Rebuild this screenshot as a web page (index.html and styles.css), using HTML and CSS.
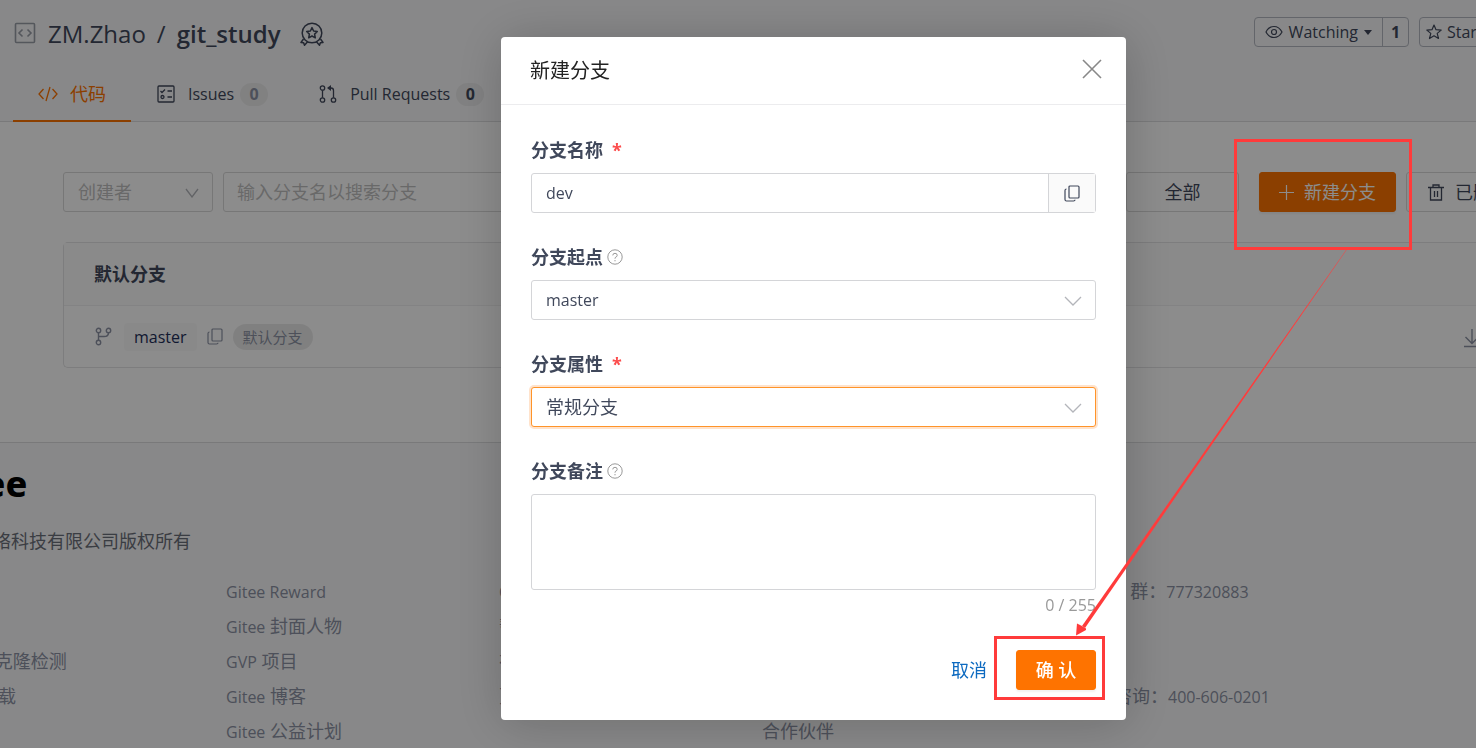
FILE: index.html
```html
<!DOCTYPE html>
<html lang="zh-CN">
<head>
<meta charset="utf-8">
<title>ZM.Zhao / git_study</title>
<link rel="stylesheet" href="styles.css">
</head>
<body>
<div class="page">
  <header class="repo-header">
    <div class="title-row">
      <svg class="repo-icon" width="22" height="22" viewBox="0 0 22 22" fill="none" stroke="currentColor" stroke-width="1.6"><rect x="1.5" y="1.5" width="19" height="19" rx="1"/><path d="M8.500 7.500L5 11l3.500 3.500M13.500 7.500L17 11l-3.500 3.500"/></svg>
      <h1 class="repo-title"><a href="#">ZM.Zhao</a><span class="slash">/</span><a href="#" class="repo-name">git_study</a></h1>
      <svg class="medal" width="24" height="24" viewBox="0 0 24 24" fill="none" stroke="currentColor" stroke-width="1.5" stroke-linejoin="round"><circle cx="12" cy="11" r="9.800"/><path d="M12 5.600l1.600 3.400 3.700.5-2.700 2.600.7 3.700L12 14l-3.300 1.800.7-3.700-2.700-2.600 3.700-.5zM3.500 17L1 20.500l2.600.2.900 2.600 3.300-3.800M20.500 17l2.500 3.500-2.600.2-.9 2.600-3.300-3.800"/></svg>
      <div class="actions">
        <div class="count-group">
          <button class="act" type="button"><svg width="18" height="14" viewBox="0 0 18 14" fill="none" stroke="currentColor" stroke-width="1.200"><path d="M1 7c2-3.800 4.700-5.500 8-5.500S15 3.200 17 7c-2 3.800-4.700 5.500-8 5.500S3 10.800 1 7z"/><circle cx="9" cy="7" r="2.500"/></svg>Watching<svg width="8" height="5" viewBox="0 0 8 5"><path d="M0 0h8L4 5z" fill="currentColor"/></svg></button>
          <a class="num" href="#">1</a>
        </div>
        <div class="star-clip">
          <button class="act star" type="button"><svg width="16" height="16" viewBox="0 0 16 16" fill="none" stroke="currentColor" stroke-width="1.200" stroke-linejoin="round"><path d="M8 1l2 4.700 5.200.4-4 3.300 1.300 5.100L8 11.800l-4.500 2.700 1.300-5.100-4-3.300 5.200-.4z"/></svg>Star</button>
        </div>
      </div>
    </div>
    <nav class="tabs">
      <a class="tab active" href="#"><svg width="20" height="16" viewBox="0 0 20 16" fill="none" stroke="currentColor" stroke-width="1.300"><path d="M5.500 3L1 8l4.500 5M14.500 3L19 8l-4.500 5M12 1L8 15"/></svg><span class="cjk">代码</span></a>
      <a class="tab" href="#"><svg width="18" height="18" viewBox="0 0 18 18" fill="none" stroke="currentColor" stroke-width="1.300"><rect x="1" y="1" width="16" height="16" rx="1"/><path d="M3.500 6l1.500 1.500L8 4.500M10.500 6H15M10.500 12H15"/><circle cx="5.500" cy="12" r="1.500"/></svg>Issues<span class="badge muted">0</span></a>
      <a class="tab" href="#"><svg width="18" height="20" viewBox="0 0 18 20" fill="none" stroke="currentColor" stroke-width="1.300"><circle cx="3.500" cy="4" r="2.200"/><circle cx="3.500" cy="16" r="2.200"/><circle cx="14.500" cy="16" r="2.200"/><path d="M3.500 6.200v7.600M14.500 13.800V6.500q0-2.500-2.500-2.500h-1"/><path d="M8 4l4-3v6z" fill="currentColor" stroke="none"/></svg>Pull Requests<span class="badge">0</span></a>
    </nav>
  </header>

  <main class="content">
    <div class="toolbar">
      <div class="select-wrap creator">
        <select aria-label="创建者"><option>创建者</option></select>
        <svg class="chev" width="14" height="10" viewBox="0 0 14 10" fill="none" stroke="currentColor" stroke-width="1.300"><path d="M1 1l6 8 6-8"/></svg>
      </div>
      <input class="search" type="text" placeholder="输入分支名以搜索分支" aria-label="输入分支名以搜索分支">
      <button class="btn all" type="button">全部</button>
      <button class="btn primary new" type="button"><svg width="15" height="15" viewBox="0 0 15 15" stroke="currentColor" stroke-width="1.200"><path d="M7.500 0v15M0 7.500h15"/></svg>新建分支</button>
      <div class="deleted-clip">
        <button class="btn deleted" type="button"><svg width="16" height="17" viewBox="0 0 16 17" fill="none" stroke="currentColor" stroke-width="1.300"><path d="M0 3.500h16M5 3.500V1h6v2.500M2.500 3.500v12.500h11V3.500M6.500 7v6M9.500 7v6"/></svg>已删除分支</button>
      </div>
    </div>
    <section class="card">
      <h2 class="card-head">默认分支</h2>
      <div class="card-row">
        <svg class="branch" width="17" height="19" viewBox="0 0 17 19" fill="none" stroke="currentColor" stroke-width="1.400"><circle cx="3.500" cy="3.500" r="2.200"/><circle cx="3.500" cy="15.500" r="2.200"/><circle cx="13.500" cy="3.500" r="2.200"/><path d="M3.500 5.700v7.600M13.500 5.700q0 3.800-4.500 3.800H3.500"/></svg>
        <a class="branch-name" href="#">master</a>
        <button class="icon-btn" type="button" aria-label="复制"><svg width="16" height="17" viewBox="0 0 16 17" fill="none" stroke="currentColor" stroke-width="1.200"><rect x="5" y="1" width="10" height="12" rx="1"/><path d="M2.500 4Q1 4 1 5.500V14.500Q1 16 2.500 16H9.500Q11 16 11 14.800"/></svg></button>
        <span class="pill">默认分支</span>
        <svg class="download" width="18" height="19" viewBox="0 0 18 19" fill="none" stroke="currentColor" stroke-width="1.400"><path d="M9 0v14M2.500 8L9 14.500 15.500 8M1 17.500h16"/></svg>
      </div>
    </section>
  </main>

  <footer class="footer">
    <div class="logo">Gitee</div>
    <p class="copyright">深圳市奥思网络科技有限公司版权所有</p>
    <div class="links">
      <ul class="first">
        <li><a href="#"><span class="lat">Git</span> 大全</a></li>
        <li><a href="#"><span class="lat">Git</span> 命令</a></li>
        <li><a href="#"><span class="lat">CopyCat</span> 代码克隆检测</a></li>
        <li><a href="#"><span class="lat">APP</span> 与插件下载</a></li>
      </ul>
      <ul>
        <li><a href="#"><span class="lat">Gitee Reward</span></a></li>
        <li><a href="#"><span class="lat">Gitee</span> 封面人物</a></li>
        <li><a href="#"><span class="lat">GVP</span> 项目</a></li>
        <li><a href="#"><span class="lat">Gitee</span> 博客</a></li>
        <li><a href="#"><span class="lat">Gitee</span> 公益计划</a></li>
      </ul>
      <ul>
        <li><a href="#"><span class="lat">OpenAPI</span></a></li>
        <li><a href="#">帮助文档</a></li>
        <li><a href="#">在线自助服务</a></li>
        <li><a href="#">更新日志</a></li>
      </ul>
      <ul>
        <li><a href="#">关于我们</a></li>
        <li><a href="#">加入我们</a></li>
        <li><a href="#">使用条款</a></li>
        <li><a href="#">意见建议</a></li>
        <li><a href="#">合作伙伴</a></li>
      </ul>
      <ul>
        <li>官方技术交流 <span class="lat">QQ</span> 群：<span class="lat">777320883</span></li>
        <li></li>
        <li></li>
        <li>企业版官方售前咨询：<span class="lat">400-606-0201</span></li>
      </ul>
    </div>
  </footer>
</div>

<div class="mask">
  <form class="modal" role="dialog" aria-labelledby="dlg-title">
    <div class="modal-head">
      <h2 id="dlg-title">新建分支</h2>
      <button class="icon-btn close" type="button" aria-label="关闭"><svg width="20" height="20" viewBox="0 0 20 20" stroke="currentColor" stroke-width="1.600"><path d="M1 1l18 18M19 1L1 19"/></svg></button>
    </div>
    <div class="modal-body">
      <div class="field">
        <label for="name">分支名称<span class="req">*</span></label>
        <div class="input-group">
          <input id="name" type="text" value="dev">
          <button class="addon" type="button" aria-label="复制"><svg width="16" height="17" viewBox="0 0 16 17" fill="none" stroke="currentColor" stroke-width="1.200"><rect x="5" y="1" width="10" height="12" rx="1"/><path d="M2.500 4Q1 4 1 5.500V14.500Q1 16 2.500 16H9.500Q11 16 11 14.800"/></svg></button>
        </div>
      </div>
      <div class="field">
        <label for="start">分支起点<svg class="help" width="16" height="16" viewBox="0 0 16 16" fill="none" stroke="currentColor"><circle cx="8" cy="8" r="7.200"/><path d="M5.800 6.400Q5.800 4.300 8 4.300T10.200 6.300Q10.200 7.500 9 8T8 9.700M8 11v1.300"/></svg></label>
        <div class="select-wrap">
          <select id="start" class="lat"><option>master</option></select>
          <svg class="chev" width="18" height="10" viewBox="0 0 18 10" fill="none" stroke="currentColor" stroke-width="1.300"><path d="M1 1l8 8 8-8"/></svg>
        </div>
      </div>
      <div class="field">
        <label for="kind">分支属性<span class="req">*</span></label>
        <div class="select-wrap">
          <select id="kind" class="focused"><option>常规分支</option></select>
          <svg class="chev" width="18" height="10" viewBox="0 0 18 10" fill="none" stroke="currentColor" stroke-width="1.300"><path d="M1 1l8 8 8-8"/></svg>
        </div>
      </div>
      <div class="field">
        <label for="note">分支备注<svg class="help" width="16" height="16" viewBox="0 0 16 16" fill="none" stroke="currentColor"><circle cx="8" cy="8" r="7.200"/><path d="M5.800 6.400Q5.800 4.300 8 4.300T10.200 6.300Q10.200 7.500 9 8T8 9.700M8 11v1.300"/></svg></label>
        <textarea id="note"></textarea>
        <div class="counter">0 / 255</div>
      </div>
      <div class="modal-foot">
        <button class="link-btn" type="button">取消</button>
        <button class="btn primary ok" type="submit">确 认</button>
      </div>
    </div>
  </form>
</div>

<svg class="notes" width="1476" height="748" viewBox="0 0 1476 748" fill="none" aria-hidden="true">
  <rect x="1235.500" y="140.500" width="175" height="108" stroke="#ff3b3b" stroke-width="3"/>
  <rect x="995.500" y="637.500" width="108" height="61" stroke="#ff3b3b" stroke-width="3"/>
  <path d="M1346.200 249.800L1346.500 250 1085 628 1082 626z" fill="#ff3b3b"/>
  <path d="M1076 635.500L1077 623.500 1081 625.500 1086 628.500 1086 630z" fill="#ff3b3b"/>
</svg>
</body>
</html>
```
FILE: styles.css
```css
* { box-sizing: border-box; }
body {
  margin: 0;
  font: 16px/24px "Open Sans", "Noto Sans CJK SC", sans-serif;
  color: #40485b;
  background: #fff;
  overflow: hidden;
}
a { color: inherit; text-decoration: none; }
h1, h2, p, ul { margin: 0; padding: 0; font-weight: 400; }
ul { list-style: none; }
button, input, select, textarea { font: inherit; color: inherit; }
button { cursor: pointer; }
svg { flex: none; }
.cjk { font-size: 18px; }
.page { height: 100vh; overflow: hidden; display: flex; flex-direction: column; }

.repo-header { background: #f8f8f9; border-bottom: 1px solid #dcdddf; }
.title-row { display: flex; align-items: center; height: 68px; padding-left: 14px; }
.repo-icon { color: #9a9ea8; margin: 0 12px 2px 0; }
.repo-title { display: flex; font-size: 24px; line-height: 32px; }
.slash { margin: 0 11px; }
.repo-name { font-weight: 600; }
.medal { margin-left: 19px; }
.actions { margin: 0 0 4px auto; display: flex; gap: 10px; }
.count-group { display: flex; border: 1px solid #b4b8c2; border-radius: 4px; }
.act { display: flex; align-items: center; gap: 6px; height: 28px; padding: 0 10px; border: 0; background: none; white-space: nowrap; }
.num { width: 26px; border-left: 1px solid #b4b8c2; text-align: center; font-weight: 700; line-height: 28px; }
.star-clip { width: 57px; overflow: hidden; }
.star { gap: 5px; height: 30px; padding: 0 6px; border: 1px solid #b4b8c2; border-radius: 4px; }
.tabs { display: flex; height: 53px; padding-left: 13px; gap: 1px; }
.tab { display: flex; align-items: center; gap: 13px; padding: 0 25px; border-bottom: 2px solid transparent; margin-bottom: -1px; }
.tab.active { gap: 12px; color: #fe7300; border-color: #fe7300; }
.badge { margin-left: -7px; width: 28px; height: 23px; border-radius: 12px; background: #ebebec; text-align: center; font-weight: 700; line-height: 23px; }
.badge.muted { color: #8c92a4; }

.content { display: flex; flex-direction: column; gap: 30px; padding: 50px 0 74px 63px; }
.toolbar { display: flex; height: 40px; font-size: 18px; }
.select-wrap { position: relative; height: 40px; color: #40485b; }
.select-wrap select { appearance: none; width: 100%; height: 40px; padding: 0 14px; border: 1px solid #d4d5d8; border-radius: 3px; background: #fff; font-size: 18px; }
.select-wrap select.lat { font-size: 16px; }
.chev { position: absolute; right: 14px; top: 16px; color: #b3b5ba; pointer-events: none; }
.creator { width: 150px; margin-right: 10px; color: #bfbfbf; }
.creator select { border-color: #d9d9d9; }
.search { flex: 1; min-width: 0; padding: 0 13px; border: 1px solid #d9d9d9; border-radius: 3px; background: #fff; }
.search::placeholder { color: #bfbfbf; opacity: 1; }
.btn { display: flex; align-items: center; justify-content: center; height: 40px; border: 1px solid #d9d9d9; border-radius: 3px; background: #fff; font-size: 18px; white-space: nowrap; }
.btn.primary { background: #fe7300; border-color: #fe7300; color: #fff; box-shadow: 0 2px 2px rgba(0, 0, 0, .05); }
.all { width: 113px; margin-right: 20px; }
.new { width: 137px; gap: 10px; }
.deleted-clip { width: 70px; margin-left: 10px; overflow: hidden; }
.deleted { gap: 11px; padding: 0 21px; }
.card { border: 1px solid #e3e3e5; border-right: 0; border-radius: 5px 0 0 5px; }
.card-head { padding: 0 30px; background: #fbfbfb; border-bottom: 1px solid #efeff0; font-size: 18px; font-weight: 700; line-height: 62px; }
.card-row { display: flex; align-items: center; height: 61px; padding-left: 31px; color: #8c92a4; }
.branch-name { margin: 0 10px 0 12px; padding: 2px 10px; border-radius: 4px; background: #fafafa; color: #1e2f59; }
.icon-btn { display: flex; padding: 0; border: 0; background: none; }
.pill { margin-left: 10px; padding: 0 10px; border-radius: 13px; background: #eaeaea; font-size: 15px; line-height: 26px; }
.download { margin: 4px -5px 0 auto; }

.footer { flex: 1; padding-top: 21px; margin-left: -116px; background: #f8f8f9; border-top: 1px solid #dcdddf; font-size: 18px; color: #8c92a4; }
.logo { font-family: "Noto Sans", sans-serif; font-size: 36px; font-weight: 800; line-height: 40px; color: #000; margin-left: 46px; }
.copyright { margin: 24px 0 0 1px; line-height: 26px; white-space: nowrap; color: #6b6f7a; }
.links { display: grid; grid-template-columns: 342px 273px 263px 226px 1fr; margin-top: 20px; line-height: 35px; white-space: nowrap; }
.links li { height: 35px; }
.first { padding-left: 8px; }
.lat { font-size: 16px; }

.mask { position: fixed; inset: 0; display: flex; justify-content: center; align-items: flex-start; padding: 37px 0 0 151px; background: rgba(0, 0, 0, .45); }
.modal { width: 625px; border-radius: 4px; background: #fff; box-shadow: 1px 3px 50px rgba(0, 0, 0, .2); }
.modal-head { display: flex; justify-content: space-between; align-items: center; height: 68px; padding: 0 24px 0 29px; border-bottom: 1px solid #ececee; }
.modal-head h2 { font-size: 20px; line-height: 28px; color: #222; }
.close { color: #888; margin-bottom: 4px; }
.modal-body { display: flex; flex-direction: column; gap: 30px; padding: 31px 30px 30px; }
.field label { display: flex; align-items: center; height: 28px; margin-bottom: 9px; font-size: 18px; font-weight: 700; }
.req { margin-left: 9px; color: #fc4c4c; }
.help { margin-left: 4px; color: #999; }
.input-group { display: flex; height: 40px; border: 1px solid #d4d5d8; border-radius: 3px; }
.input-group input { flex: 1; min-width: 0; padding: 0 14px; border: 0; background: none; outline: 0; }
.addon { display: flex; align-items: center; justify-content: center; width: 47px; padding: 0; border: 0; border-left: 1px solid #d4d5d8; background: #fafafa; }
.select-wrap select.focused { border-color: #ff9429; box-shadow: 0 0 0 2px rgba(254, 115, 0, .2); }
.field textarea { display: block; width: 100%; height: 96px; padding: 8px 14px; border: 1px solid #d4d5d8; border-radius: 3px; resize: none; }
.counter { margin-top: 3px; text-align: right; color: #999; }
.modal-foot { display: flex; justify-content: flex-end; gap: 29px; margin-top: 3px; }
.link-btn { padding: 0; border: 0; background: none; font-size: 18px; color: #0d6ac0; }
.ok { width: 80px; font-weight: 500; }

.notes { position: fixed; left: 0; top: 0; pointer-events: none; }
```
